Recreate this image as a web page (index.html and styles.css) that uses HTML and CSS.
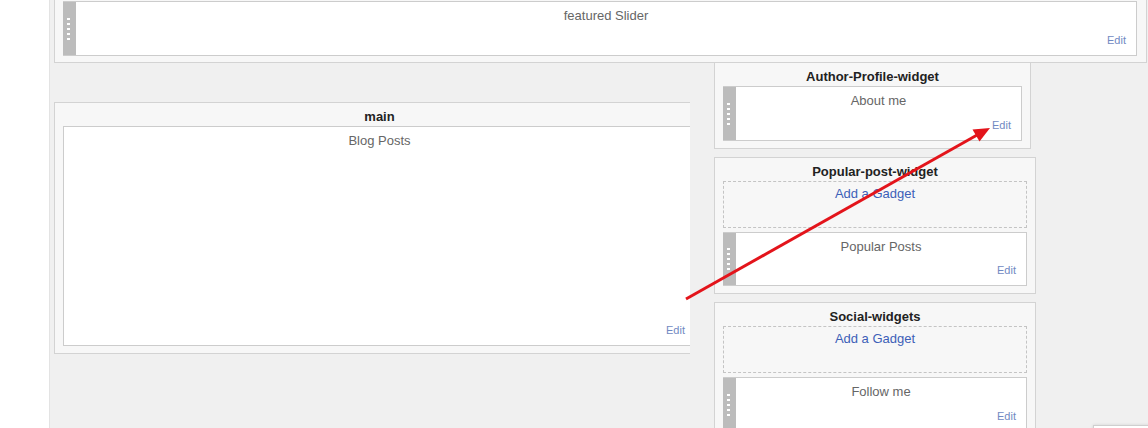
FILE: index.html
```html
<!DOCTYPE html>
<html lang="en">
<head>
<meta charset="utf-8">
<title>Layout</title>
<link rel="stylesheet" href="styles.css">
</head>
<body>
<div class="page">
  <div class="gutter"></div>
  <div class="canvas">
    <section class="section featured">
      <div class="widget w-featured">
        <div class="handle"><span class="grip"></span></div>
        <div class="wbody"><div class="wtitle">featured Slider</div><a class="edit">Edit</a></div>
      </div>
    </section>
    <div class="row">
      <div class="main-col">
        <section class="section main">
          <h2 class="stitle">main</h2>
          <div class="widget w-main">
            <div class="wbody"><div class="wtitle">Blog Posts</div><a class="edit">Edit</a></div>
          </div>
        </section>
      </div>
      <div class="side-col">
        <section class="section side author">
          <h2 class="stitle">Author-Profile-widget</h2>
          <div class="widget w-std">
            <div class="handle"><span class="grip"></span></div>
            <div class="wbody"><div class="wtitle">About me</div><a class="edit">Edit</a></div>
          </div>
        </section>
        <section class="section side wide">
          <h2 class="stitle">Popular-post-widget</h2>
          <div class="gadget"><a class="add">Add a Gadget</a></div>
          <div class="widget w-pop">
            <div class="handle"><span class="grip"></span></div>
            <div class="wbody"><div class="wtitle">Popular Posts</div><a class="edit">Edit</a></div>
          </div>
        </section>
        <section class="section side wide">
          <h2 class="stitle">Social-widgets</h2>
          <div class="gadget"><a class="add">Add a Gadget</a></div>
          <div class="widget w-std">
            <div class="handle"><span class="grip"></span></div>
            <div class="wbody"><div class="wtitle">Follow me</div><a class="edit">Edit</a></div>
          </div>
        </section>
      </div>
    </div>
  </div>
  <svg class="arrow" width="1148" height="428" viewBox="0 0 1148 428">
    <line x1="686" y1="299" x2="978" y2="134.5" stroke="#e3141b" stroke-width="3"/>
    <polygon points="990,128 979.5,141.5 972.5,129.5" fill="#e3141b"/>
  </svg>
  <div class="peek"></div>
</div>
</body>
</html>
```

FILE: styles.css
```css
* { box-sizing: border-box; }
html, body { margin: 0; padding: 0; height: 100%; }
body {
  font-family: "Liberation Sans", Arial, sans-serif;
  background: #ffffff;
  overflow: hidden;
}
.page {
  position: relative;
  display: flex;
  width: 1148px;
  height: 428px;
  overflow: hidden;
}
.gutter {
  width: 49px;
  flex: none;
  background: #ffffff;
}
.canvas {
  flex: 1;
  background: #f0f0f0;
  border-left: 1px solid #e3e3e3;
  padding-left: 4px;
}
.section {
  background: #f7f7f7;
  border: 1px solid #d3d3d3;
  padding: 0 8px 7px 8px;
}
.featured {
  width: 1093px;
  margin-top: -9px;
  padding: 9px 9px 6px 8px;
}
.row {
  display: flex;
  align-items: flex-start;
}
.main-col {
  flex: none;
  width: 636px;
  overflow: hidden;
  margin-top: 39px;
}
.main {
  width: 651px;
}
.side-col {
  flex: none;
  margin-left: 24px;
  margin-top: -1px;
}
.side + .side { margin-top: 8px; }
.author { width: 317px; }
.wide { width: 322px; }
.stitle {
  margin: 0;
  padding: 6px 0 1px;
  font-size: 13px;
  line-height: 16px;
  font-weight: bold;
  color: #222222;
  text-align: center;
}
.widget {
  display: flex;
  background: #ffffff;
  border: 1px solid #cccccc;
}
.widget:has(.handle) { border-left: 0; }
.w-featured, .w-std { height: 55px; }
.w-pop { height: 54px; }
.w-main { height: 220px; }
.handle {
  flex: none;
  width: 13px;
  background: #bcbcbc;
  display: flex;
  align-items: center;
  padding-left: 4px;
}
.grip {
  display: block;
  width: 3px;
  height: 22px;
  background: repeating-linear-gradient(#ffffff 0 2px, transparent 2px 5px);
}
.wbody {
  flex: 1;
  display: flex;
  flex-direction: column;
  padding: 6px 10px 8px;
  text-align: center;
}
.wtitle {
  font-size: 13px;
  line-height: 16px;
  color: #666666;
}
.edit {
  margin-top: auto;
  align-self: flex-end;
  font-size: 11px;
  line-height: 13px;
  color: #7189c2;
}
.gadget {
  height: 47px;
  border: 1px dashed #c4c4c4;
  padding-top: 2px;
  margin-bottom: 4px;
  text-align: center;
}
.add {
  font-size: 13px;
  line-height: 16px;
  color: #3d5fb8;
}
.arrow {
  position: absolute;
  left: 0;
  top: 0;
  pointer-events: none;
}
.peek {
  position: absolute;
  left: 1093px;
  top: 425px;
  width: 60px;
  height: 20px;
  background: #ffffff;
  border: 1px solid #cfcfcf;
  box-shadow: 0 0 3px rgba(0, 0, 0, 0.12);
}
```
